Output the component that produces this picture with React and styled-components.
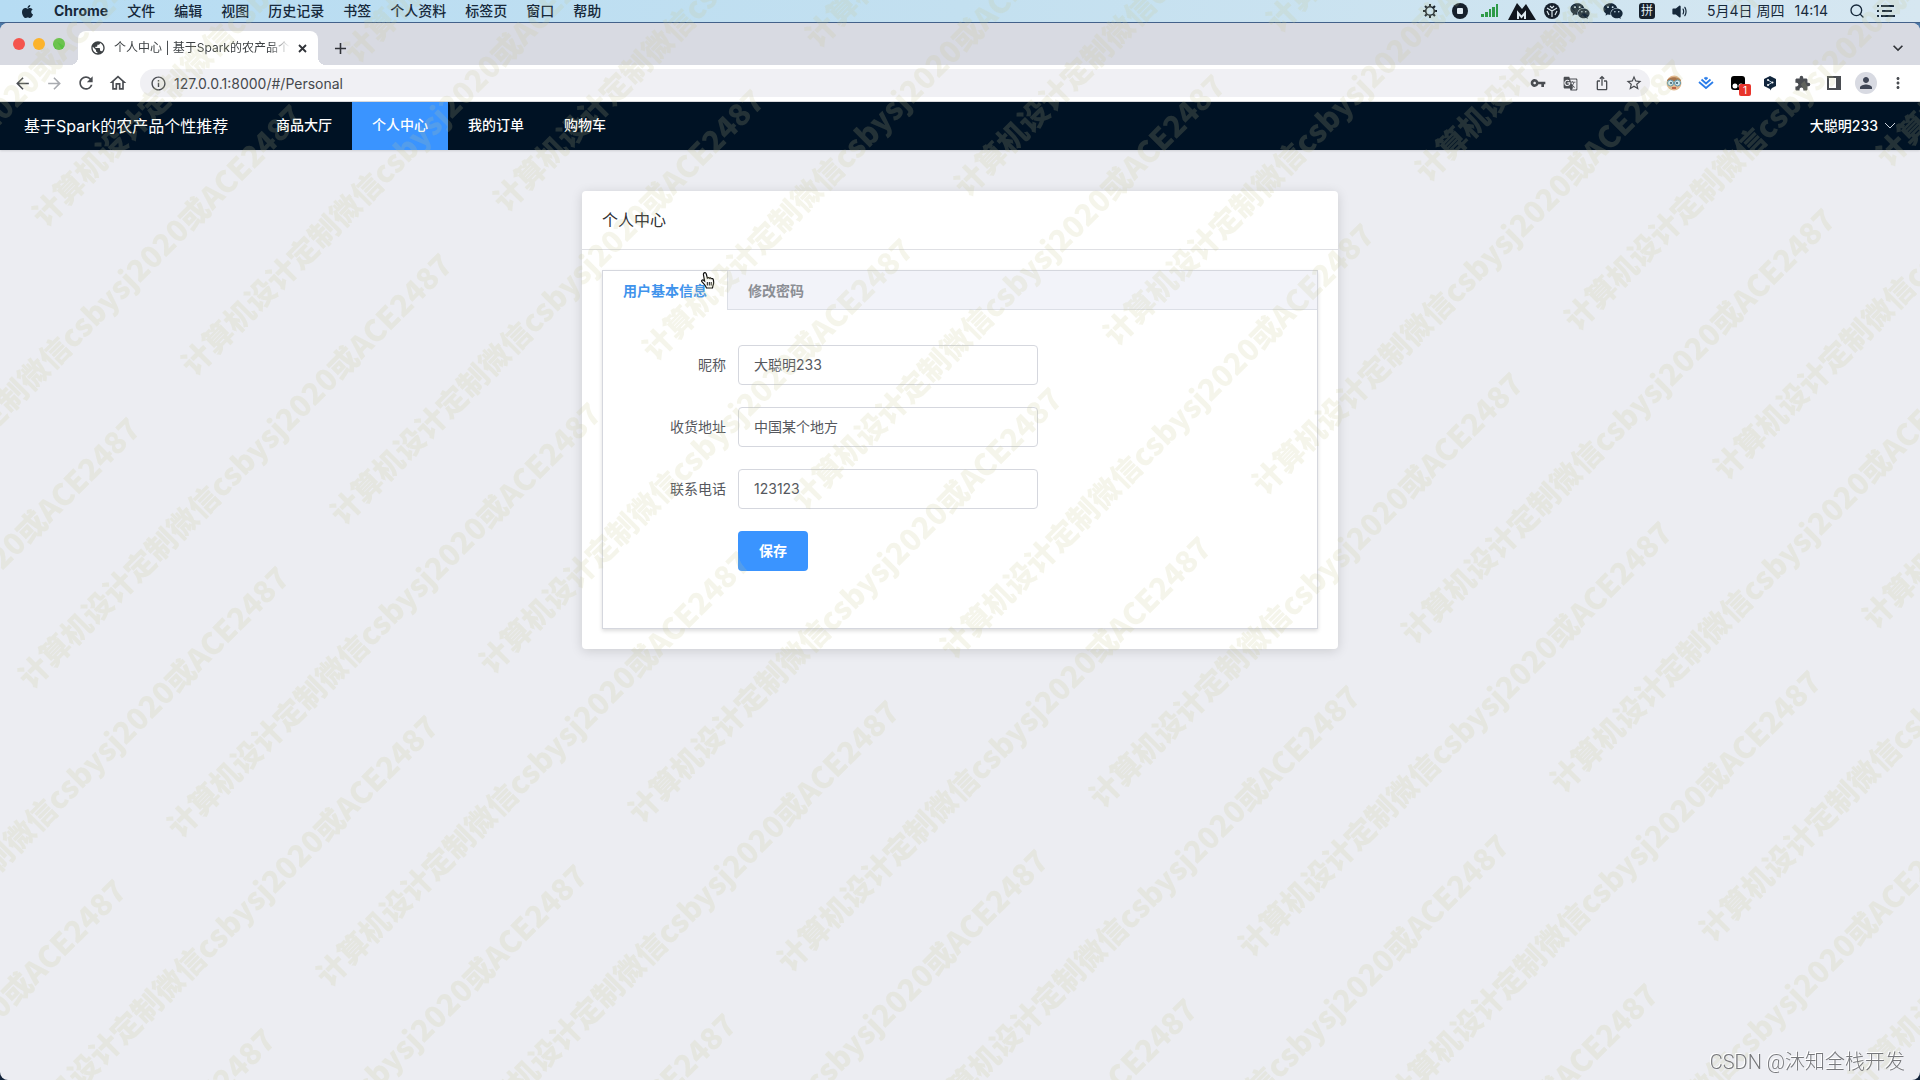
import React, { useEffect, useState } from "react";
import styled, { createGlobalStyle } from "styled-components";
import {
  MdArrowBack, MdArrowForward, MdRefresh, MdOutlineHome, MdInfoOutline, MdVpnKey,
  MdGTranslate, MdIosShare, MdStarOutline, MdExtension, MdPerson, MdMoreVert,
  MdAdd, MdPublic, MdExpandMore,
} from "react-icons/md";
import { FaApple } from "react-icons/fa";
import { AiFillWechat } from "react-icons/ai";
import { IoVolumeMedium } from "react-icons/io5";
import { FiSearch } from "react-icons/fi";

const GlobalStyle = createGlobalStyle`
  * { box-sizing: border-box; }
  body {
    margin: 0;
    background: #12233a;
    font-family: Inter, "Noto Sans CJK SC", sans-serif;
    font-size: 14px;
    color: #303133;
  }
  button, input { font: inherit; color: inherit; }
  button { border: 0; padding: 0; background: none; cursor: pointer; }
  svg { display: block; flex: none; }
`;

const Screen = styled.div`
  display: flex;
  flex-direction: column;
  min-height: 100vh;
`;

/* ---------- system menu bar ---------- */
const SystemBar = styled.header`
  display: flex;
  align-items: center;
  justify-content: space-between;
  height: 23px;
  padding: 0 20px;
  border-bottom: 1px solid #43618a;
  background: linear-gradient(90deg, #b6dcf3, #c3e0f0 50%, #d6e7f1);
  color: #16283a;
  line-height: 22px;
`;
const SystemMenu = styled.nav`
  display: flex;
  align-items: center;
  gap: 19px;
`;
const SystemMenuItem = styled.button`
  font-weight: ${(p) => (p.$strong ? 700 : 500)};
  line-height: 20px;
  white-space: nowrap;
`;
const StatusArea = styled.div`
  display: flex;
  align-items: center;
`;
const StatusIcon = styled.span`
  display: flex;
  align-items: center;
  justify-content: center;
  width: ${(p) => p.$w || 30}px;
`;
const InputMethod = styled.span`
  width: 16px;
  height: 16px;
  border-radius: 3px;
  background: #16202c;
  color: #e2eef5;
  font-size: 12px;
  line-height: 16px;
  text-align: center;
`;
const Clock = styled.time`
  display: flex;
  gap: 10px;
  margin: 0 14px 0 10px;
  white-space: nowrap;
`;

/* ---------- browser window ---------- */
const BrowserWindow = styled.div`
  display: flex;
  flex: 1;
  flex-direction: column;
  overflow: hidden;
  border-radius: 8px;
  background: #ecedf2;
`;
const TopBackdrop = styled.div`
  display: flex;
  flex: 1;
  flex-direction: column;
  background: linear-gradient(#4a76a5 20px, #12233a 20px);
`;
const TabStrip = styled.div`
  display: flex;
  align-items: flex-end;
  height: 42px;
  padding: 0 13px;
  background: #d8dae2;
  color: #3c4043;
`;
const TrafficLights = styled.div`
  display: flex;
  gap: 8px;
  width: 65px;
  padding-bottom: 15px;
`;
const Light = styled.button`
  width: 12px;
  height: 12px;
  border-radius: 50%;
  background: ${(p) => p.$color};
`;
const BrowserTab = styled.div`
  position: relative;
  display: flex;
  align-items: center;
  width: 240px;
  height: 34px;
  padding: 0 8px 0 12px;
  border-radius: 8px 8px 0 0;
  background: #fff;
  &::before,
  &::after {
    content: "";
    position: absolute;
    bottom: 0;
    width: 8px;
    height: 8px;
  }
  &::before {
    right: 100%;
    background: radial-gradient(circle at 0 0, transparent 8px, #fff 8px);
  }
  &::after {
    left: 100%;
    background: radial-gradient(circle at 100% 0, transparent 8px, #fff 8px);
  }
`;
const TabTitle = styled.span`
  flex: 1;
  margin: 0 4px 0 8px;
  overflow: hidden;
  font-size: 12px;
  line-height: 20px;
  white-space: nowrap;
  mask-image: linear-gradient(90deg, #000 88%, transparent);
`;
const IconButton = styled.button`
  display: flex;
  align-items: center;
  justify-content: center;
  width: ${(p) => p.$w || 32}px;
  height: ${(p) => p.$h || 28}px;
  color: ${(p) => p.$color || "#4a4d52"};
`;
const TabTools = styled.div`
  display: flex;
  flex: 1;
  justify-content: space-between;
  padding: 0 0 3px 6px;
`;
const Toolbar = styled.div`
  display: flex;
  align-items: center;
  height: 37px;
  padding: 0 6px;
  border-bottom: 1px solid #d9dade;
  background: #fff;
`;
const Omnibox = styled.div`
  display: flex;
  flex: 1;
  align-items: center;
  height: 28px;
  margin: 0 8px 0 6px;
  padding-left: 2px;
  border-radius: 14px;
  background: #f0f0f4;
`;
const Address = styled.input`
  flex: 1;
  height: 28px;
  padding: 0;
  border: 0;
  outline: 0;
  background: none;
  color: #45484d;
`;
const ExtensionIcon = styled(IconButton)`
  position: relative;
`;
const Badge = styled.span`
  position: absolute;
  right: 3px;
  bottom: 1px;
  width: 12px;
  height: 12px;
  border-radius: 2px;
  background: #e8352c;
  color: #fff;
  font-size: 10px;
  line-height: 12px;
`;
const Avatar = styled.span`
  display: flex;
  align-items: center;
  justify-content: center;
  width: 22px;
  height: 22px;
  border-radius: 50%;
  background: #d8dae2;
  color: #3f4656;
`;

/* ---------- site ---------- */
const SiteNav = styled.nav`
  display: flex;
  align-items: center;
  height: 48px;
  padding: 0 24px;
  background: #001224;
  color: #fff;
  box-shadow: 0 1px 2px rgba(0, 0, 0, 0.12);
`;
const Brand = styled.h1`
  width: 232px;
  margin: 0;
  font-size: 16px;
  font-weight: 400;
  line-height: 24px;
  white-space: nowrap;
`;
const NavLink = styled.a`
  height: 48px;
  padding: 0 20px;
  background: ${(p) => (p.$active ? "#3a94ff" : "transparent")};
  color: #fff;
  font-weight: 500;
  line-height: 46px;
  text-decoration: none;
`;
const UserMenu = styled.button`
  display: flex;
  align-items: center;
  gap: 6px;
  height: 48px;
  margin-left: auto;
  font-weight: 500;
  line-height: 46px;
`;
const Content = styled.main`
  display: flex;
  flex: 1;
  align-items: flex-start;
  justify-content: center;
  padding: 41px 20px;
`;
const Card = styled.section`
  width: 100%;
  max-width: 756px;
  border-radius: 4px;
  background: #fff;
  box-shadow: 0 2px 12px rgba(0, 0, 0, 0.14);
`;
const CardTitle = styled.h2`
  margin: 0;
  padding: 17px 20px;
  border-bottom: 1px solid #dfe0e4;
  font-size: 16px;
  font-weight: 400;
  line-height: 24px;
`;
const CardBody = styled.div`
  padding: 20px;
`;
const Tabs = styled.div`
  border: 1px solid #d5d7de;
  box-shadow: 0 2px 4px rgba(0, 0, 0, 0.14);
`;
const TabList = styled.div`
  display: flex;
  height: 39px;
  border-bottom: 1px solid #dcdfe6;
  background: #f2f3f9;
`;
const Tab = styled.button`
  height: 39px;
  padding: 0 20px;
  border-right: 1px solid ${(p) => (p.$active ? "#dcdfe6" : "transparent")};
  background: ${(p) => (p.$active ? "#fff" : "transparent")};
  color: ${(p) => (p.$active ? "#3f93ec" : "#8b8e94")};
  font-weight: 700;
  line-height: 39px;
`;
const ProfileForm = styled.form`
  display: flex;
  flex-direction: column;
  gap: 22px;
  padding: 35px 15px 57px;
`;
const Field = styled.div`
  display: flex;
  align-items: center;
`;
const Label = styled.label`
  width: 120px;
  padding-right: 12px;
  color: #56585e;
  line-height: 40px;
  text-align: right;
`;
const TextInput = styled.input`
  width: 300px;
  height: 40px;
  padding: 0 15px 2px;
  border: 1px solid #d5d7de;
  border-radius: 4px;
  outline: 0;
  background: #fff;
  color: #56585e;
`;
const SaveButton = styled.button`
  width: 70px;
  height: 40px;
  margin-left: 120px;
  padding-bottom: 2px;
  border-radius: 4px;
  background: #3a94ff;
  color: #fff;
  font-weight: 700;
`;

/* ---------- overlays ---------- */
const Overlay = styled.div`
  position: fixed;
  inset: 0;
  overflow: hidden;
  pointer-events: none;
`;
const Mark = styled.span`
  position: absolute;
  color: rgba(198, 202, 142, 0.18);
  font-family: "Noto Sans CJK SC", sans-serif;
  font-size: 30px;
  font-weight: 900;
  line-height: 40px;
  white-space: nowrap;
  transform: rotate(-45deg);
  transform-origin: 0 50%;
`;
const Signature = styled.span`
  position: absolute;
  right: 15px;
  bottom: 3px;
  color: #77787c;
  font-family: Roboto, "Noto Sans CJK SC", sans-serif;
  font-size: 20px;
  font-weight: 300;
  line-height: 30px;
  text-shadow: -1px -1px 0 #fff;
`;
const Pointer = styled.svg`
  position: absolute;
  left: 98px;
  top: 1px;
  pointer-events: none;
`;
const TabAnchor = styled.div`
  position: relative;
`;

const MARK_TEXT = "计算机设计定制微信csbysj2020或ACE2487";

function Watermark() {
  const [size, setSize] = useState({ w: window.innerWidth, h: window.innerHeight });
  useEffect(() => {
    const onResize = () => setSize({ w: window.innerWidth, h: window.innerHeight });
    window.addEventListener("resize", onResize);
    return () => window.removeEventListener("resize", onResize);
  }, []);
  const marks = [];
  for (let col = -6; col < 8; col++) {
    for (let row = -12; row < 16; row++) {
      const x = 36 + col * 461 + row * 149;
      const y = 199 - col * 15 + row * 149;
      if (x > -440 && x < size.w + 20 && y > -40 && y < size.h + 420) {
        marks.push({ x, y });
      }
    }
  }
  return (
    <Overlay aria-hidden="true">
      {marks.map(({ x, y }) => (
        <Mark key={`${x}:${y}`} style={{ left: x, top: y }}>{MARK_TEXT}</Mark>
      ))}
      <Signature>CSDN @沐知全栈开发</Signature>
    </Overlay>
  );
}

const CloseIcon = () => (
  <svg width="9" height="9" viewBox="0 0 9 9" stroke="currentColor" strokeWidth="1.800">
    <path d="m1 1 7 7M8 1 1 8" />
  </svg>
);
const GearIcon = () => (
  <svg width="16" height="16" viewBox="0 0 16 16" fill="none" stroke="#16202c">
    <circle cx="8" cy="8" r="4.300" strokeWidth="1.600" />
    <path d="M8 1v2.500M8 12.500V15M1 8h2.500M12.500 8H15M3 3l1.800 1.800M11.200 11.200 13 13M3 13l1.800-1.800M11.200 4.800 13 3" strokeWidth="2" />
  </svg>
);
const StopIcon = () => (
  <svg width="16" height="16" viewBox="0 0 16 16">
    <circle cx="8" cy="8" r="8" fill="#16202c" />
    <rect x="5" y="5" width="6" height="6" rx="1" fill="#dfeaf2" />
  </svg>
);
const SignalIcon = () => (
  <svg width="18" height="14" viewBox="0 0 18 14" fill="#2f9a48">
    <rect x="0" y="10" width="3" height="3" /><rect x="4" y="8" width="3" height="5" />
    <rect x="8" y="5" width="2" height="8" /><rect x="11" y="3" width="3" height="10" />
    <rect x="15" y="0" width="2" height="13" />
  </svg>
);
const MountainIcon = () => (
  <svg width="28" height="18" viewBox="0 0 28 18">
    <path d="M0 18 9 1l5 6 4-5 10 16z" fill="#10161e" />
    <path d="M10 17v-6l3.500 4 3.500-4v6" fill="none" stroke="#dce8ef" strokeWidth="2" />
  </svg>
);
const WheelIcon = () => (
  <svg width="16" height="16" viewBox="0 0 16 16">
    <circle cx="8" cy="8" r="8" fill="#16202c" />
    <path d="M8 14V8M8 8 3 5M8 8l5-3M5 12 3 8M11 12l2-4M6 3l2 2 2-2" fill="none" stroke="#dce8ef" strokeWidth="1.200" />
  </svg>
);
const ListIcon = () => (
  <svg width="18" height="12" viewBox="0 0 18 12" stroke="#16283a" strokeWidth="2">
    <path d="M4 1h13M5 6h10M4 11h14M0 1h2M0 6h2M0 11h2" />
  </svg>
);
const FaceIcon = () => (
  <svg width="16" height="16" viewBox="0 0 16 16">
    <circle cx="8" cy="8" r="7.500" fill="#e3b98f" />
    <path d="M1 6C2 1 14 1 15 6z" fill="#a8744a" />
    <circle cx="4.500" cy="8" r="3" fill="#cfe9f2" stroke="#5c93a6" />
    <circle cx="11.500" cy="8" r="3" fill="#cfe9f2" stroke="#5c93a6" />
    <circle cx="5" cy="8" r="1" fill="#33535f" /><circle cx="11" cy="8" r="1" fill="#33535f" />
    <path d="M6 13h4" stroke="#b0492f" strokeWidth="1.500" />
  </svg>
);
const StackIcon = () => (
  <svg width="16" height="14" viewBox="0 0 16 14" fill="none" stroke="#2b7de9" strokeWidth="1.800">
    <path d="m1 6 7 6 7-6M3.500 3.500 8 7.500l4.500-4M6.500 1.500 8 3l1.500-1.500" />
  </svg>
);
const MonkeyIcon = () => (
  <svg width="16" height="16" viewBox="0 0 16 16">
    <rect x="1" y="1" width="14" height="14" rx="3" fill="#000" />
    <circle cx="5" cy="11" r="2.500" fill="#fff" /><circle cx="11" cy="11" r="2.500" fill="#fff" />
  </svg>
);
const HexIcon = () => (
  <svg width="14" height="16" viewBox="0 0 14 16">
    <path d="M7 1 13 4v7l-4 2-2 2.500V14L1 11V4z" fill="#12263d" />
    <path d="m5 5 4 2.500L5 10" fill="none" stroke="#b9cfe0" />
    <circle cx="5" cy="5" r="1" fill="#fff" /><circle cx="9.500" cy="7.500" r="1" fill="#fff" /><circle cx="5" cy="10" r="1" fill="#fff" />
  </svg>
);
const PanelIcon = () => (
  <svg width="14" height="14" viewBox="0 0 14 14">
    <path d="M1 1h12v12H1z" fill="none" stroke="#4a4d52" strokeWidth="2" />
    <path d="M9 1h4v12H9z" fill="#4a4d52" />
  </svg>
);
const ThinChevron = () => (
  <svg width="12" height="12" viewBox="0 0 12 12" fill="none" stroke="#cdd4db" strokeWidth="1">
    <path d="m1 3 5 5 5-5" />
  </svg>
);

const SYSTEM_MENU = ["文件", "编辑", "视图", "历史记录", "书签", "个人资料", "标签页", "窗口", "帮助"];
const NAV_LINKS = ["商品大厅", "个人中心", "我的订单", "购物车"];
const FIELDS = [
  { id: "nickname", label: "昵称", value: "大聪明233" },
  { id: "address", label: "收货地址", value: "中国某个地方" },
  { id: "phone", label: "联系电话", value: "123123" },
];

export default function App() {
  return (
    <Screen>
      <GlobalStyle />
      <SystemBar>
        <SystemMenu>
          <FaApple size={15} />
          <SystemMenuItem $strong>Chrome</SystemMenuItem>
          {SYSTEM_MENU.map((m) => <SystemMenuItem key={m}>{m}</SystemMenuItem>)}
        </SystemMenu>
        <StatusArea>
          <StatusIcon><GearIcon /></StatusIcon>
          <StatusIcon><StopIcon /></StatusIcon>
          <StatusIcon><SignalIcon /></StatusIcon>
          <StatusIcon $w={34}><MountainIcon /></StatusIcon>
          <StatusIcon $w={26}><WheelIcon /></StatusIcon>
          <StatusIcon><AiFillWechat size={22} /></StatusIcon>
          <StatusIcon $w={36}><AiFillWechat size={22} /></StatusIcon>
          <StatusIcon $w={32}><InputMethod>拼</InputMethod></StatusIcon>
          <StatusIcon $w={34}><IoVolumeMedium size={19} /></StatusIcon>
          <Clock><span>5月4日 周四</span><span>14:14</span></Clock>
          <StatusIcon><FiSearch size={16} /></StatusIcon>
          <StatusIcon $w={28}><ListIcon /></StatusIcon>
        </StatusArea>
      </SystemBar>

      <TopBackdrop>
        <BrowserWindow>
          <TabStrip>
            <TrafficLights>
              <Light $color="#f4544d" aria-label="关闭" />
              <Light $color="#fcb32c" aria-label="最小化" />
              <Light $color="#5ac240" aria-label="缩放" />
            </TrafficLights>
            <BrowserTab>
              <MdPublic size={16} />
              <TabTitle>个人中心 | 基于Spark的农产品个性推荐</TabTitle>
              <IconButton $w={16} $h={16} $color="#303338" aria-label="关闭标签页"><CloseIcon /></IconButton>
            </BrowserTab>
            <TabTools>
              <IconButton $color="#303338" aria-label="新标签页"><MdAdd size={19} /></IconButton>
              <IconButton $w={18} $color="#303338" aria-label="搜索标签页"><MdExpandMore size={20} /></IconButton>
            </TabTools>
          </TabStrip>
          <Toolbar>
            <IconButton aria-label="后退"><MdArrowBack size={19} /></IconButton>
            <IconButton $color="#a9abb0" aria-label="前进"><MdArrowForward size={19} /></IconButton>
            <IconButton aria-label="刷新"><MdRefresh size={20} /></IconButton>
            <IconButton aria-label="主页"><MdOutlineHome size={20} /></IconButton>
            <Omnibox>
              <IconButton aria-label="网站信息"><MdInfoOutline size={17} /></IconButton>
              <Address aria-label="地址" defaultValue="127.0.0.1:8000/#/Personal" />
              <IconButton aria-label="密码"><MdVpnKey size={16} /></IconButton>
              <IconButton aria-label="翻译"><MdGTranslate size={15} /></IconButton>
              <IconButton aria-label="分享"><MdIosShare size={16} /></IconButton>
              <IconButton aria-label="收藏"><MdStarOutline size={18} /></IconButton>
            </Omnibox>
            <ExtensionIcon aria-label="头像扩展"><FaceIcon /></ExtensionIcon>
            <ExtensionIcon aria-label="下载扩展"><StackIcon /></ExtensionIcon>
            <ExtensionIcon aria-label="脚本扩展"><MonkeyIcon /><Badge>1</Badge></ExtensionIcon>
            <ExtensionIcon aria-label="翻译扩展"><HexIcon /></ExtensionIcon>
            <IconButton aria-label="扩展程序"><MdExtension size={17} /></IconButton>
            <IconButton aria-label="侧边栏"><PanelIcon /></IconButton>
            <IconButton aria-label="账户"><Avatar><MdPerson size={18} /></Avatar></IconButton>
            <IconButton aria-label="更多"><MdMoreVert size={18} /></IconButton>
          </Toolbar>

          <SiteNav>
            <Brand>基于Spark的农产品个性推荐</Brand>
            {NAV_LINKS.map((n) => (
              <NavLink key={n} href="#" $active={n === "个人中心"}>{n}</NavLink>
            ))}
            <UserMenu>大聪明233 <ThinChevron /></UserMenu>
          </SiteNav>

          <Content>
            <Card>
              <CardTitle>个人中心</CardTitle>
              <CardBody>
                <Tabs>
                  <TabAnchor>
                    <TabList role="tablist">
                      <Tab role="tab" aria-selected="true" $active>用户基本信息</Tab>
                      <Tab role="tab" aria-selected="false">修改密码</Tab>
                    </TabList>
                    <Pointer width="14" height="17" viewBox="0 0 14 17" aria-hidden="true">
                      <path d="M3 1c1-1 2 0 2.300 1l1 4c.7-.8 1.700-.5 2 .2.700-.6 1.600-.3 1.900.5.800-.5 1.900 0 2.100 1 .5 2.300.7 4-.3 5.800L11.500 16h-6L4.500 14C3.500 12.500 2 11 .9 9.700 0 8.500 1.500 7.500 2.600 8.300l1 .8L2.500 3C2.300 2 2.500 1.500 3 1z" fill="#fff" stroke="#111" strokeWidth="1.200" />
                      <path d="M6.300 10v3.500M8.300 10v3.500M10.200 10v3.500" stroke="#111" />
                    </Pointer>
                  </TabAnchor>
                  <ProfileForm onSubmit={(e) => e.preventDefault()}>
                    {FIELDS.map((f) => (
                      <Field key={f.id}>
                        <Label htmlFor={f.id}>{f.label}</Label>
                        <TextInput id={f.id} defaultValue={f.value} />
                      </Field>
                    ))}
                    <SaveButton type="submit">保存</SaveButton>
                  </ProfileForm>
                </Tabs>
              </CardBody>
            </Card>
          </Content>
        </BrowserWindow>
      </TopBackdrop>
      <Watermark />
    </Screen>
  );
}
